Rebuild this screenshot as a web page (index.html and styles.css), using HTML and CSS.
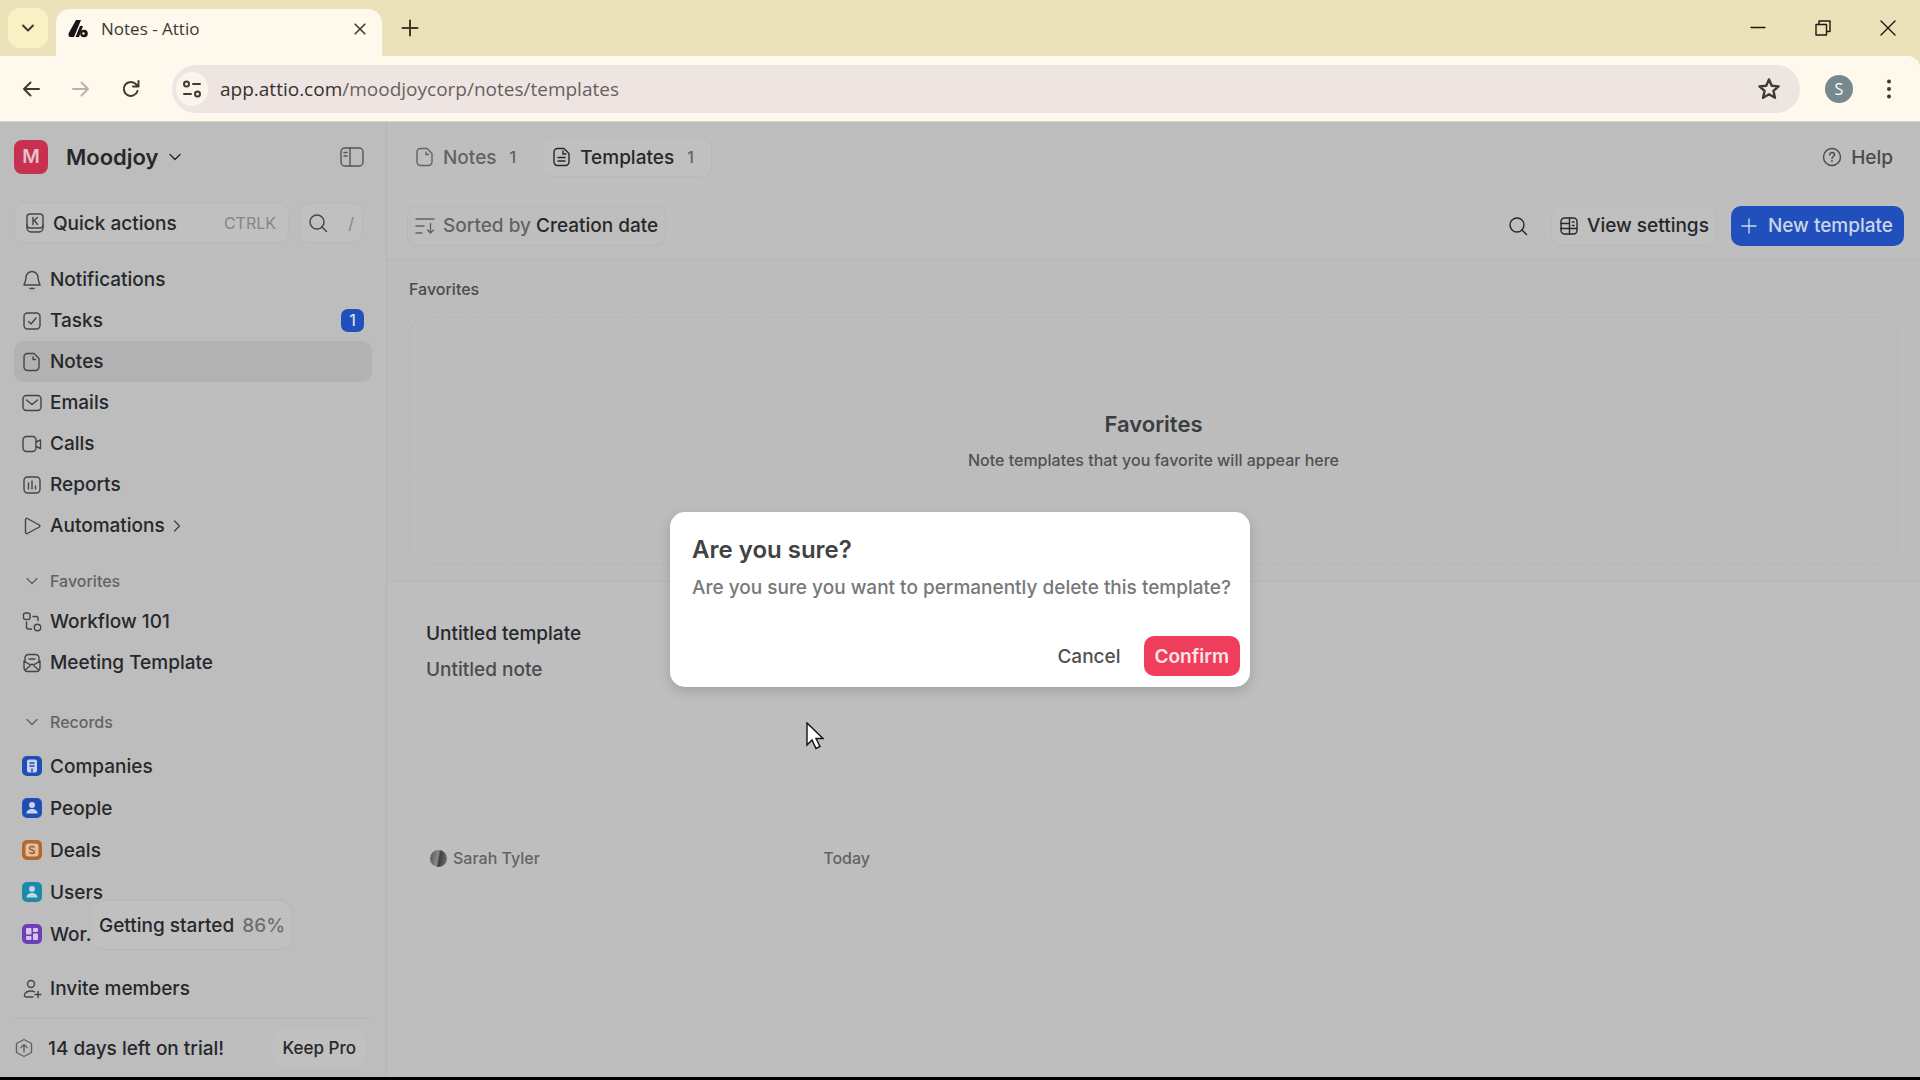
FILE: index.html
```html
<!DOCTYPE html>
<html lang="en">
<head>
  <meta charset="UTF-8">
  <meta name="viewport" content="width=device-width, initial-scale=1.0">
  <title>Notes - Attio</title>
  <link rel="stylesheet" href="styles.css">
</head>
<body>
  <svg class="sprite" aria-hidden="true">
    <symbol id="i-chevron" viewBox="0 0 20 20"><path d="M5 7.500l5 5 5-5"/></symbol>
    <symbol id="i-search" viewBox="0 0 20 20"><circle cx="9" cy="9" r="7"/><path d="M14 14l4.500 4.500"/></symbol>
    <symbol id="i-note" viewBox="0 0 20 20"><path d="M5.500 1.500h6.500l5 5v8.500a3.500 3.500 0 0 1-3.500 3.500h-8A3.500 3.500 0 0 1 2 15V5a3.500 3.500 0 0 1 3.500-3.500z"/><path d="M11 5v2.500h2.500"/></symbol>
    <symbol id="i-person" viewBox="0 0 20 20"><circle cx="10" cy="7" r="3"/><path d="M4.500 15.500c0-3 2.500-4.500 5.500-4.500s5.500 1.500 5.500 4.500z"/></symbol>
  </svg>

  <header class="browser">
    <div class="tabstrip">
      <button class="tab-search" aria-label="Search tabs"><svg class="icon bold" viewBox="0 0 20 20"><path d="M5 7.500l5 5 5-5"/></svg></button>
      <div class="tab">
        <svg class="logo" viewBox="0 0 20 20"><path d="M8 1h5L6 18H2.500C.5 18 0 16 .8 14z"/><path d="M12 7h3l-4 11H7.500z"/><circle cx="16" cy="14.500" r="3.800"/><circle cx="15.500" cy="14.500" r="1.200" fill="#fff8ec"/></svg>
        <span class="tab-title">Notes - Attio</span>
        <button class="tab-close" aria-label="Close tab"><svg class="icon bold small" viewBox="0 0 20 20"><path d="M4 4l12 12M16 4L4 16"/></svg></button>
      </div>
      <button class="tab-new" aria-label="New tab"><svg class="icon bold" viewBox="0 0 20 20"><path d="M10 2.500v15M2.500 10h15"/></svg></button>
      <div class="win-buttons">
        <button aria-label="Minimize"><svg class="icon" viewBox="0 0 20 20"><path d="M3 9.500h14"/></svg></button>
        <button aria-label="Restore"><svg class="icon" viewBox="0 0 20 20"><path d="M3 6.500h10.500V17H3zM6 6V3h11v10.500h-3"/></svg></button>
        <button aria-label="Close"><svg class="icon" viewBox="0 0 20 20"><path d="M3 3l14 14M17 3L3 17"/></svg></button>
      </div>
    </div>
    <div class="toolbar">
      <button class="tool" aria-label="Back"><svg class="icon bold" viewBox="0 0 20 20"><path d="M18 10H3M9.500 3.500L3 10l6.500 6.500"/></svg></button>
      <button class="tool off" aria-label="Forward"><svg class="icon bold" viewBox="0 0 20 20"><path d="M2 10h15M10.500 3.500L17 10l-6.500 6.500"/></svg></button>
      <button class="tool" aria-label="Reload"><svg class="icon bold" viewBox="0 0 20 20"><path d="M16.500 12A7 7 0 1 1 15 5.200l2 2M17.500 2v5.500H12"/></svg></button>
      <div class="omnibox">
        <button class="site-info" aria-label="Site information"><svg class="icon bold" viewBox="0 0 20 20"><circle cx="4.500" cy="5" r="2.500"/><path d="M11 5h7M2 15h7"/><circle cx="15.500" cy="15" r="2.500"/></svg></button>
        <div class="url"><span>app.attio.com</span>/moodjoycorp/notes/templates</div>
        <button class="star" aria-label="Bookmark"><svg class="icon big bold" viewBox="0 0 20 20"><path d="M10 2l2.300 5.300 5.700.5-4.300 3.800 1.300 5.700L10 14.300l-5 3 1.300-5.700L2 7.800l5.700-.5z"/></svg></button>
      </div>
      <button class="profile">S</button>
      <button class="tool menu" aria-label="Menu"><svg class="icon fill" viewBox="0 0 20 20"><circle cx="10" cy="2.500" r="2"/><circle cx="10" cy="10" r="2"/><circle cx="10" cy="17.500" r="2"/></svg></button>
    </div>
  </header>

  <div class="app">
    <aside class="sidebar">
      <div class="workspace">
        <span class="ws-logo">M</span>
        <button class="ws-name">Moodjoy <svg class="icon"><use href="#i-chevron"/></svg></button>
        <button class="collapse" aria-label="Collapse sidebar"><svg class="icon panel" viewBox="0 0 24 20"><rect x="1" y="1" width="22" height="18" rx="4"/><path d="M10 1v18M4 5.500h3M4 9h3"/></svg></button>
      </div>
      <div class="quick">
        <button class="quick-actions">
          <svg class="icon" viewBox="0 0 20 20"><rect x="2" y="1" width="16" height="14" rx="3"/><path d="M2 12v3a4 4 0 0 0 4 4h8a4 4 0 0 0 4-4v-3M8 4.500v7M12.500 4.500L8 8.500M9.500 7.500l3 4"/></svg>
          <span>Quick actions</span><kbd>CTRLK</kbd>
        </button>
        <button class="quick-search" aria-label="Search"><svg class="icon"><use href="#i-search"/></svg><kbd>/</kbd></button>
      </div>

      <nav class="nav">
        <a href="#"><svg class="icon" viewBox="0 0 20 20"><path d="M10 1.500a6 6 0 0 0-6 6c0 3.500-1.500 5-2 7.500h16c-.5-2.500-2-4-2-7.500a6 6 0 0 0-6-6zM8 18.500h4"/></svg>Notifications</a>
        <a href="#"><svg class="icon" viewBox="0 0 20 20"><rect x="2" y="2" width="16" height="16" rx="3.500"/><path d="M6.500 10.500l2.500 2.500 5-6"/></svg>Tasks<span class="badge">1</span></a>
        <a href="#" class="active"><svg class="icon"><use href="#i-note"/></svg>Notes</a>
        <a href="#"><svg class="icon" viewBox="0 0 20 20"><rect x="1" y="2.500" width="18" height="15" rx="3.500"/><path d="M4.500 7l5.500 4.500L15.500 7"/></svg>Emails</a>
        <a href="#"><svg class="icon" viewBox="0 0 20 20"><rect x="1" y="2.500" width="13" height="15" rx="3.500"/><path d="M14 8l4.500-2v8.500L14 12.500"/></svg>Calls</a>
        <a href="#"><svg class="icon" viewBox="0 0 20 20"><rect x="2" y="2" width="16" height="16" rx="3.500"/><path d="M6.500 8v6M10 6v8M13.500 11v3"/></svg>Reports</a>
        <a href="#"><svg class="icon" viewBox="0 0 20 20"><path d="M3.500 3.500v13a1.200 1.200 0 0 0 1.800 1l12-6.500a1.200 1.200 0 0 0 0-2l-12-6.500a1.200 1.200 0 0 0-1.800 1z"/></svg>Automations<svg class="icon right"><use href="#i-chevron"/></svg></a>
      </nav>

      <section class="group">
        <button class="group-title"><svg class="icon"><use href="#i-chevron"/></svg>Favorites</button>
        <nav class="nav">
          <a href="#"><svg class="icon" viewBox="0 0 20 20"><rect x="1.500" y="1" width="6.500" height="6.500" rx="2"/><path d="M11 4.500h3a2 2 0 0 1 2 2v2M4.500 10v5a2 2 0 0 0 2 2h3"/><circle cx="15.500" cy="15.500" r="3.200"/></svg>Workflow 101</a>
          <a href="#"><svg class="icon" viewBox="0 0 20 20"><path d="M3 8V5a3.500 3.500 0 0 1 3.500-3.500h7A3.500 3.500 0 0 1 17 5v3M7 6h6"/><path d="M2 8l5.500 3.500h5L18 8v7a3.500 3.500 0 0 1-3.500 3.500h-9A3.500 3.500 0 0 1 2 15zM3 17l5-4M17 17l-5-4"/></svg>Meeting Template</a>
        </nav>
      </section>

      <section class="group records">
        <button class="group-title"><svg class="icon"><use href="#i-chevron"/></svg>Records</button>
        <nav class="nav">
          <a href="#"><svg class="chip blue" viewBox="0 0 20 20"><rect x="5" y="3.500" width="10" height="13" rx="2"/><path d="M7.500 7h5M7.500 10h5M10 12.500v4" stroke="#1f4fb5" stroke-width="1.500"/></svg>Companies</a>
          <a href="#"><svg class="chip blue"><use href="#i-person"/></svg>People</a>
          <a href="#"><svg class="chip orange" viewBox="0 0 20 20"><rect x="3.500" y="3.500" width="13" height="13" rx="3"/><path d="M12.500 7.500c-1-1.500-5-1.200-5 .8 0 2.200 5 1.200 5 3.500 0 2-4 2.200-5.200.6" fill="none" stroke="#a8591f" stroke-width="1.500"/></svg>Deals</a>
          <a href="#"><svg class="chip teal"><use href="#i-person"/></svg>Users</a>
          <a href="#"><svg class="chip purple" viewBox="0 0 20 20"><rect x="4" y="4" width="5.500" height="6.500" rx="1"/><rect x="11" y="4" width="5" height="4" rx="1"/><rect x="4" y="12" width="5.500" height="4" rx="1"/><rect x="11" y="9.500" width="5" height="6.500" rx="1"/></svg>Wor.</a>
        </nav>
      </section>

      <button class="getting-started">Getting started <span>86%</span></button>

      <div class="side-bottom">
        <nav class="nav"><a href="#"><svg class="icon" viewBox="0 0 20 20"><circle cx="9" cy="5" r="3.500"/><path d="M11 18H4c-3 0-2-6 5-6 1.500 0 2.500.3 3.500.8M16 12.500v6M13 15.500h6"/></svg>Invite members</a></nav>
        <div class="trial">
          <svg class="icon" viewBox="0 0 20 20"><path d="M10 1.500l7.500 4v9l-7.500 4-7.500-4v-9zM10 14V6.500M7 9.500l3-3 3 3"/></svg>
          <span>14 days left on trial!</span>
          <button>Keep Pro</button>
        </div>
      </div>
    </aside>

    <main class="main">
      <div class="tabs">
        <button class="page-tab muted"><svg class="icon"><use href="#i-note"/></svg>Notes <small>1</small></button>
        <button class="page-tab current"><svg class="icon" viewBox="0 0 20 20"><path d="M5.500 1.500h6.500l5 5v8.500a3.500 3.500 0 0 1-3.500 3.500h-8A3.500 3.500 0 0 1 2 15V5a3.500 3.500 0 0 1 3.500-3.500zM11 4v3h3M6 10.500h7M6 14h7"/></svg>Templates <small>1</small></button>
        <button class="help"><svg class="icon" viewBox="0 0 20 20"><circle cx="10" cy="10" r="8.500"/><path d="M7.800 8c0-3.500 4.700-3 4.700-.3 0 1.800-2.500 1.800-2.500 3.800M10 13.500v1"/></svg>Help</button>
      </div>
      <div class="actions">
        <button class="sort"><svg class="icon" viewBox="0 0 20 20"><path d="M1 3h18M1 10h8M1 17h6M15.500 7.500V17M12.500 14l3 3 3-3"/></svg>Sorted by <b>Creation date</b></button>
        <button class="find" aria-label="Search"><svg class="icon"><use href="#i-search"/></svg></button>
        <button class="view"><svg class="icon" viewBox="0 0 20 20"><rect x="2" y="2" width="16" height="16" rx="3.500"/><path d="M10.500 2v16M2 7.500h8.500M2 12.500h16M13.500 6h1.500M13.500 9.500h1.500"/></svg>View settings</button>
        <button class="new"><svg class="icon" viewBox="0 0 20 20"><path d="M10 3v14M3 10h14"/></svg>New template</button>
      </div>

      <section class="favorites">
        <h2>Favorites</h2>
        <div class="empty">
          <h3>Favorites</h3>
          <p>Note templates that you favorite will appear here</p>
        </div>
      </section>

      <section class="templates">
        <article class="card">
          <h3>Untitled template</h3>
          <p>Untitled note</p>
          <footer><span class="avatar"></span>Sarah Tyler<time>Today</time></footer>
        </article>
      </section>
    </main>

    <div class="overlay">
      <div class="dialog" role="dialog" aria-labelledby="dialog-title">
        <h2 id="dialog-title">Are you sure?</h2>
        <p>Are you sure you want to permanently delete this template?</p>
        <div class="dialog-buttons">
          <button class="cancel">Cancel</button>
          <button class="confirm">Confirm</button>
        </div>
      </div>
    </div>
    <svg class="cursor" viewBox="0 0 18 28"><path d="M1 1v22l5-5 4 8.500 4-2-4-8h7z"/></svg>
  </div>
</body>
</html>
```

FILE: styles.css
```css
:root {
  --strip: #ebe2ba;
  --toolbar: #fff8ec;
  --page: #bebebe;
  --side: #bdbdbd;
  --line: #b6b6b6;
  --text: #27282b;
  --muted: #626365;
  --blue: #2150bd;
}
* { box-sizing: border-box; margin: 0; padding: 0; }
body {
  height: 100vh;
  display: flex;
  flex-direction: column;
  overflow: hidden;
  background: #000;
  padding-bottom: 3px;
  font-family: Inter, "Liberation Sans", sans-serif;
  font-size: 19px;
  font-weight: 500;
  color: var(--text);
}
button {
  border: none;
  background: none;
  font: inherit;
  color: inherit;
  cursor: pointer;
  display: flex;
  align-items: center;
  white-space: nowrap;
}
a { color: inherit; text-decoration: none; }
.sprite { display: none; }
.icon {
  width: 20px;
  height: 20px;
  flex: none;
  fill: none;
  stroke: currentColor;
  stroke-width: 1.4;
  stroke-linecap: round;
  stroke-linejoin: round;
}
.icon.small { width: 16px; height: 16px; }
.icon.big { width: 24px; height: 24px; }
.icon.bold { stroke-width: 2; }
.icon.fill { fill: currentColor; stroke: none; }
.icon.panel { width: 24px; }
.icon.right { transform: rotate(-90deg); }

/* browser frame */
.browser {
  background: var(--strip);
  color: #3f3a2e;
  font-family: "Open Sans", "Noto Sans", sans-serif;
  font-weight: 400;
}
.tabstrip { height: 56px; display: flex; align-items: center; padding-left: 8px; }
.tab-search {
  width: 40px;
  height: 40px;
  justify-content: center;
  border-radius: 12px;
  background: #fbf0c4;
}
.tab {
  width: 326px;
  height: 47px;
  margin: 9px 0 0 8px;
  padding: 0 12px 8px;
  display: flex;
  align-items: center;
  background: var(--toolbar);
  border-radius: 14px 14px 0 0;
}
.logo { width: 20px; height: 20px; fill: #161616; }
.tab-title { margin-left: 13px; font-size: 17px; color: #3a3833; }
.tab-close { margin-left: auto; padding: 2px; }
.tab-new { margin-left: 18px; }
.win-buttons { margin-left: auto; display: flex; color: #1d1a10; }
.win-buttons button { width: 65px; height: 56px; justify-content: center; }
.toolbar {
  height: 66px;
  display: flex;
  align-items: center;
  padding: 0 19px 0 6px;
  background: var(--toolbar);
  border-radius: 0 12px 0 0;
  border-bottom: 1px solid #d8d4c8;
}
.tool { width: 50px; height: 48px; justify-content: center; }
.tool.off { color: #b9b4a9; }
.tool.menu { width: 24px; margin-left: 24px; }
.omnibox {
  flex: 1;
  height: 48px;
  margin-left: 16px;
  padding: 0 19px 0 4px;
  display: flex;
  align-items: center;
  border-radius: 24px;
  background: #eee5e2;
}
.site-info {
  width: 32px;
  height: 34px;
  margin-right: 12px;
  justify-content: center;
  border-radius: 16px;
  background: #fbf4ec;
}
.url { flex: 1; font-size: 19px; color: #67615d; }
.url span { color: #35312f; }
.profile {
  width: 28px;
  height: 28px;
  margin-left: 25px;
  justify-content: center;
  border-radius: 50%;
  background: #77898f;
  color: #fff;
  font-size: 16px;
}

/* app shell */
.app { position: relative; flex: 1; min-height: 0; display: flex; background: var(--page); }
.sidebar {
  position: relative;
  width: 387px;
  flex: none;
  display: flex;
  flex-direction: column;
  padding: 0 14px;
  background: var(--side);
  border-right: 1px solid var(--line);
}
.workspace { height: 70px; display: flex; align-items: center; }
.ws-logo {
  width: 34px;
  height: 34px;
  line-height: 34px;
  border-radius: 8px;
  background: #c8304f;
  color: #e6c3ca;
  text-align: center;
  font-weight: 600;
}
.ws-name { margin-left: 18px; gap: 6px; font-size: 22px; font-weight: 600; }
.collapse { margin-left: auto; margin-right: 8px; color: #555; }
.quick { display: flex; gap: 10px; margin: 11px 0 16px; }
.quick button {
  height: 40px;
  border: 1px solid #b9b9b9;
  border-radius: 10px;
  background: #c0c0c0;
}
.quick .icon { color: #444548; }
.quick-actions { width: 275px; padding: 0 12px 0 10px; gap: 8px; }
.quick-search { width: 64px; padding: 0 8px; justify-content: space-between; }
kbd { margin-left: auto; font-family: inherit; font-size: 16px; font-weight: 400; color: #858585; }
.nav a {
  height: 41px;
  display: flex;
  align-items: center;
  gap: 8px;
  padding: 0 8px;
  border-radius: 10px;
}
.nav .icon { color: #444548; }
.nav .active { background: #b2b2b2; }
.nav .right { margin-left: -6px; }
.badge {
  width: 23px;
  height: 23px;
  margin-left: auto;
  line-height: 23px;
  border-radius: 7px;
  background: var(--blue);
  color: #d5dcec;
  font-size: 16px;
  text-align: center;
}
.group { margin-top: 14px; }
.group-title {
  height: 41px;
  padding: 0 8px;
  gap: 8px;
  font-size: 16px;
  color: var(--muted);
}
.records { margin-top: 18px; }
.records .nav { padding-top: 3px; }
.records a { height: 42px; }
.chip { width: 20px; height: 20px; flex: none; border-radius: 5px; fill: #c9d3ea; }
.blue { background: #1f4fb5; }
.orange { background: #b8672b; fill: #dcc0a6; }
.teal { background: #1c8ba8; }
.purple { background: #6c3fb8; fill: #d8c5ea; }
.getting-started {
  position: absolute;
  left: 92px;
  bottom: 127px;
  height: 50px;
  padding: 0 6px;
  gap: 8px;
  border: 1px solid #b7b7b7;
  border-left-color: transparent;
  border-radius: 12px;
  background: #c0c0c0;
}
.getting-started span { color: #6d6e70; }
.side-bottom { margin-top: auto; }
.trial {
  height: 59px;
  margin-top: 9px;
  display: flex;
  align-items: center;
  border-top: 1px solid #b4b4b4;
}
.trial .icon { color: var(--muted); }
.trial span { margin-left: 14px; }
.trial button {
  height: 36px;
  margin: 0 6px 0 auto;
  padding: 0 10px;
  border-radius: 10px;
  background: #c0c0c0;
  font-size: 17px;
}

/* page */
.main { flex: 1; min-width: 0; }
.tabs { height: 70px; padding: 0 18px; display: flex; align-items: center; gap: 8px; }
.page-tab { height: 40px; padding: 0 9px; gap: 8px; border: 1px solid transparent; border-radius: 10px; }
.page-tab small { margin: 0 8px 0 5px; font-size: 16px; color: var(--muted); }
.muted { color: var(--muted); }
.current { border-color: #b9b9b9; background: #c0c0c0; }
.help { margin-left: auto; padding-right: 9px; gap: 9px; color: #4a4b4d; }
.actions {
  height: 68px;
  padding: 0 16px 0 20px;
  display: flex;
  align-items: center;
  border-bottom: 1px solid var(--line);
}
.actions button { height: 40px; border: 1px solid transparent; border-radius: 10px; }
.actions .sort { padding: 0 7px; border-color: #b6b6b6; gap: 8px; color: var(--muted); }
.sort b { margin-left: -3px; font-weight: 500; color: var(--text); }
.find { margin-left: auto; padding: 0 8px; }
.actions .view { margin: 0 14px; padding: 0 7px; gap: 8px; border-color: #bababa; background: #c0c0c0; }
.actions .new { padding: 0 10px 0 7px; gap: 9px; background: var(--blue); color: #ccd5e8; }
.favorites { padding: 18px 22px 16px; border-bottom: 1px solid var(--line); background: #bcbcbc; }
.favorites h2 { font-size: 16px; line-height: 22px; font-weight: 500; color: #4a4b4d; }
.empty {
  height: 248px;
  margin-top: 17px;
  display: flex;
  flex-direction: column;
  align-items: center;
  justify-content: center;
  gap: 10px;
  border: 1px dashed #b3b3b3;
  border-radius: 18px;
}
.empty h3 { font-size: 22px; line-height: 28px; font-weight: 600; color: #3c3d3f; }
.empty p { font-size: 16px; line-height: 24px; color: #505153; }
.templates { padding: 16px 22px; }
.card {
  width: 482px;
  height: 284px;
  padding: 22px 17px 13px;
  display: flex;
  flex-direction: column;
  gap: 8px;
}
.card h3 { font-size: 19px; line-height: 28px; font-weight: 500; }
.card p { line-height: 28px; color: #4a4b4d; }
.card footer {
  margin-top: auto;
  padding: 0 4px;
  display: flex;
  align-items: center;
  gap: 6px;
  font-size: 16px;
  line-height: 22px;
  color: var(--muted);
}
.card time { margin-left: auto; }
.avatar { width: 17px; height: 17px; border-radius: 50%; background: linear-gradient(100deg, #555, #8a8a8a 45%, #3f3f3f 55%, #777); }

/* delete confirmation */
.overlay {
  position: absolute;
  inset: 0;
  display: flex;
  align-items: center;
  justify-content: center;
}
.dialog {
  width: 580px;
  padding: 22px 10px 11px 22px;
  border-radius: 15px;
  background: #fff;
  box-shadow: 0 4px 12px rgba(0, 0, 0, 0.16);
}
.dialog h2 { font-size: 24px; line-height: 32px; font-weight: 600; color: #414244; }
.dialog p { margin-top: 10px; font-size: 19px; line-height: 24px; color: #77787a; white-space: nowrap; }
.dialog-buttons { margin-top: 36px; display: flex; justify-content: flex-end; gap: 12px; }
.dialog-buttons button { height: 40px; padding: 0 11px; border-radius: 10px; }
.cancel { color: #505153; }
.confirm { background: #ee3e5c; color: #ffe3e8; font-weight: 600; }
.cursor {
  position: absolute;
  left: 806px;
  top: 600px;
  width: 18px;
  height: 28px;
  fill: #fff;
  stroke: #111;
  stroke-width: 1.4;
}
```
